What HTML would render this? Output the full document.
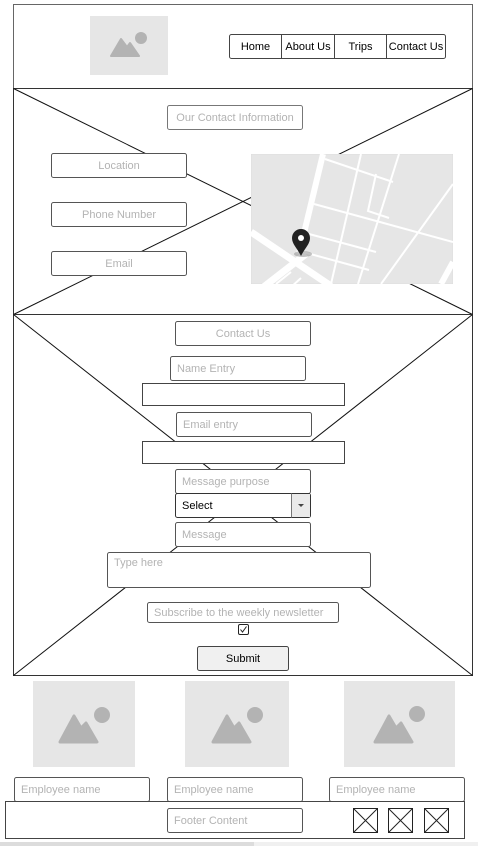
<!DOCTYPE html>
<html><head><meta charset="utf-8"><style>
html,body{margin:0;padding:0;background:#fff;width:478px;height:846px;overflow:hidden}
svg{display:block}
text{font-family:"Liberation Sans",Arial,sans-serif;font-size:11px}
.g{fill:#b3b3b3}
.k{fill:#000}
</style></head><body>
<svg width="478" height="846" viewBox="0 0 478 846" xmlns="http://www.w3.org/2000/svg">
<!-- header -->
<rect x="13.5" y="4.5" width="459" height="84" fill="#fff" stroke="#666"/>
<rect x="90" y="16" width="78" height="59" fill="#e6e6e6"/>
<circle cx="141" cy="38" r="6" fill="#b3b3b3"/>
<path d="M111 56 L121 39 L127 47 L130 43 L139 56 Z" fill="#b3b3b3" stroke="#b3b3b3" stroke-width="2" stroke-linejoin="round"/>
<rect x="229.5" y="34.5" width="216" height="24" rx="2" fill="#fff" stroke="#444"/>
<line x1="281.5" y1="34.5" x2="281.5" y2="58.5" stroke="#444"/>
<line x1="334.5" y1="34.5" x2="334.5" y2="58.5" stroke="#444"/>
<line x1="386.5" y1="34.5" x2="386.5" y2="58.5" stroke="#444"/>
<text x="255.5" y="50" text-anchor="middle" class="k">Home</text>
<text x="308" y="50" text-anchor="middle" class="k">About Us</text>
<text x="360.5" y="50" text-anchor="middle" class="k">Trips</text>
<text x="416" y="50" text-anchor="middle" class="k">Contact Us</text>

<!-- section 2 -->
<rect x="13.5" y="88.5" width="459" height="226" fill="#fff" stroke="#333"/>
<line x1="13.5" y1="88.5" x2="472.5" y2="314.5" stroke="#111"/>
<line x1="472.5" y1="88.5" x2="13.5" y2="314.5" stroke="#111"/>
<rect x="167.5" y="105.5" width="135" height="24" rx="2" fill="#fff" stroke="#777"/>
<text x="235" y="121" text-anchor="middle" class="g">Our Contact Information</text>
<rect x="51.5" y="153.5" width="135" height="24" rx="2" fill="#fff" stroke="#555"/>
<text x="119" y="169" text-anchor="middle" class="g">Location</text>
<rect x="51.5" y="202.5" width="135" height="24" rx="2" fill="#fff" stroke="#555"/>
<text x="119" y="218" text-anchor="middle" class="g">Phone Number</text>
<rect x="51.5" y="251.5" width="135" height="24" rx="2" fill="#fff" stroke="#555"/>
<text x="119" y="267" text-anchor="middle" class="g">Email</text>
<!-- map -->
<svg x="251" y="154" width="202" height="130" viewBox="0 0 202 130">
<rect width="202" height="130" fill="#e6e6e6" stroke="#ddd"/>
<g stroke="#fff" fill="none">
<path d="M72 0 L48 100" stroke-width="6"/>
<path d="M0 78 L80 132" stroke-width="7"/>
<path d="M10 135 L55 100" stroke-width="7"/>
<path d="M25 130 L40 118 M38 135 L50 124" stroke-width="2"/>
<path d="M74 5 L142 28 M125 20 L117 57 L138 64 M63 50 L202 88 M52 98 L118 116 M58 80 L125 98" stroke-width="2"/>
<path d="M110 0 L80 130 M148 0 L107 130 M202 30 L130 130" stroke-width="2"/>
<path d="M202 108 L190 130" stroke-width="6"/>
</g>
<ellipse cx="52" cy="100" rx="9" ry="3" fill="#999" opacity=".6"/>
<path d="M50 102 C46 94 41 90 41 84 A9 9 0 0 1 59 84 C59 90 54 94 50 102 Z" fill="#222"/>
<circle cx="50" cy="84" r="3" fill="#fff"/>
</svg>

<!-- section 3 -->
<rect x="13.5" y="314.5" width="459" height="361" fill="#fff" stroke="#333"/>
<line x1="13.5" y1="314.5" x2="472.5" y2="675.5" stroke="#111"/>
<line x1="472.5" y1="314.5" x2="13.5" y2="675.5" stroke="#111"/>
<rect x="175.5" y="321.5" width="135" height="24" rx="2" fill="#fff" stroke="#555"/>
<text x="243" y="337" text-anchor="middle" class="g">Contact Us</text>
<rect x="170.5" y="356.5" width="135" height="24" rx="2" fill="#fff" stroke="#555"/>
<text x="177" y="372" class="g">Name Entry</text>
<rect x="142.5" y="383.5" width="202" height="22" fill="#fff" stroke="#444"/>
<rect x="176.5" y="412.5" width="135" height="24" rx="2" fill="#fff" stroke="#555"/>
<text x="183" y="428" class="g">Email entry</text>
<rect x="142.5" y="441.5" width="202" height="22" fill="#fff" stroke="#444"/>
<rect x="175.5" y="469.5" width="135" height="24" rx="2" fill="#fff" stroke="#555"/>
<text x="182" y="485" class="g">Message purpose</text>
<rect x="175.5" y="493.5" width="135" height="24" rx="2" fill="#fff" stroke="#333"/>
<rect x="291.5" y="494" width="18.5" height="23" fill="#eaeaea"/>
<line x1="291.5" y1="493.5" x2="291.5" y2="517.5" stroke="#777"/>
<path d="M298 504 L304 504 L301 507 Z" fill="#444"/>
<text x="182" y="509" class="k">Select</text>
<rect x="175.5" y="522.5" width="135" height="24" rx="2" fill="#fff" stroke="#555"/>
<text x="182" y="538" class="g">Message</text>
<rect x="107.5" y="552.5" width="263" height="35" rx="2" fill="#fff" stroke="#555"/>
<text x="114" y="566" class="g">Type here</text>
<rect x="147.5" y="602.5" width="191" height="20" rx="2" fill="#fff" stroke="#555"/>
<text x="154" y="616" class="g">Subscribe to the weekly newsletter</text>
<rect x="238.5" y="624.5" width="10" height="10" rx="1.5" fill="#fff" stroke="#222"/>
<path d="M240.5 629.5 L242.5 632 L246.5 626.5" fill="none" stroke="#222"/>
<rect x="197.5" y="646.5" width="91" height="24" rx="2" fill="#f0f0f0" stroke="#444"/>
<text x="243" y="662" text-anchor="middle" class="k">Submit</text>

<!-- employees -->
<g>
<rect x="33" y="681" width="102" height="86" fill="#e6e6e6"/>
<circle cx="102" cy="715" r="8" fill="#b3b3b3"/>
<path d="M60 742 L74 716 L81 728 L86 723 L97 742 Z" fill="#b3b3b3" stroke="#b3b3b3" stroke-width="3" stroke-linejoin="round"/>
<rect x="185" y="681" width="104" height="86" fill="#e6e6e6"/>
<circle cx="255" cy="715" r="8" fill="#b3b3b3"/>
<path d="M213 742 L227 716 L234 728 L239 723 L250 742 Z" fill="#b3b3b3" stroke="#b3b3b3" stroke-width="3" stroke-linejoin="round"/>
<rect x="344" y="681" width="111" height="86" fill="#e6e6e6"/>
<circle cx="417" cy="714" r="8" fill="#b3b3b3"/>
<path d="M375 742 L389 716 L396 728 L401 723 L412 742 Z" fill="#b3b3b3" stroke="#b3b3b3" stroke-width="3" stroke-linejoin="round"/>
</g>
<rect x="14.5" y="777.5" width="135" height="24" rx="2" fill="#fff" stroke="#555"/>
<text x="21" y="793" class="g">Employee name</text>
<rect x="167.5" y="777.5" width="135" height="24" rx="2" fill="#fff" stroke="#555"/>
<text x="174" y="793" class="g">Employee name</text>
<rect x="329.5" y="777.5" width="135" height="24" rx="2" fill="#fff" stroke="#555"/>
<text x="336" y="793" class="g">Employee name</text>

<!-- footer -->
<path d="M5.5 801.5 H464.5 V838.5 H5.5 Z" fill="none" stroke="#444"/>
<rect x="167.5" y="808.5" width="135" height="24" rx="2" fill="#fff" stroke="#555"/>
<text x="174" y="824" class="g">Footer Content</text>
<g fill="#fff" stroke="#222">
<rect x="353.5" y="808.5" width="24" height="24"/><path d="M353.5 808.5 L377.5 832.5 M377.5 808.5 L353.5 832.5"/>
<rect x="388.5" y="808.5" width="24" height="24"/><path d="M388.5 808.5 L412.5 832.5 M412.5 808.5 L388.5 832.5"/>
<rect x="424.5" y="808.5" width="24" height="24"/><path d="M424.5 808.5 L448.5 832.5 M448.5 808.5 L424.5 832.5"/>
</g>
<rect x="0" y="842" width="254" height="4" fill="#dcdcdc"/>
<rect x="254" y="842" width="224" height="4" fill="#f0f0f0"/>
</svg>
</body></html>
